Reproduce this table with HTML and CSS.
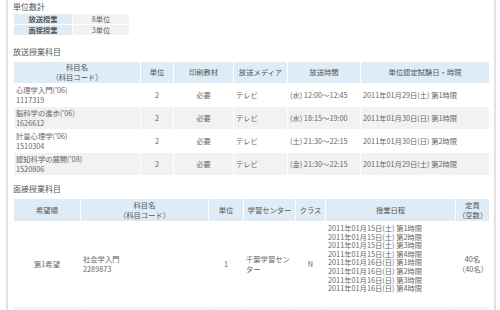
FILE: index.html
```html
<!DOCTYPE html>
<html lang="ja">
<head>
<meta charset="utf-8">
<title>単位数計</title>
<link rel="stylesheet" href="styles.css">
</head>
<body>
<div class="page">
  <h2 class="sec-title first">単位数計</h2>
  <table class="sum">
    <tr><th>放送授業</th><td>8単位</td></tr>
    <tr><th>面接授業</th><td>3単位</td></tr>
  </table>

  <h2 class="sec-title">放送授業科目</h2>
  <table class="grid bc">
    <colgroup>
      <col class="c-name"><col class="c-unit"><col class="c-text"><col class="c-media"><col class="c-time"><col class="c-exam">
    </colgroup>
    <thead>
      <tr><th>科目名<br>（科目コード）</th><th>単位</th><th>印刷教材</th><th>放送メディア</th><th>放送時間</th><th>単位認定試験日・時限</th></tr>
    </thead>
    <tbody>
      <tr><td>心理学入門(’06)<br>1117319</td><td class="ctr">2</td><td class="ctr">必要</td><td>テレビ</td><td>(水) 12:00〜12:45</td><td>2011年01月29日(土) 第1時限</td></tr>
      <tr class="alt"><td>脳科学の進歩(’06)<br>1626612</td><td class="ctr">2</td><td class="ctr">必要</td><td>テレビ</td><td>(水) 18:15〜19:00</td><td>2011年01月30日(日) 第1時限</td></tr>
      <tr><td>計量心理学(’06)<br>1510304</td><td class="ctr">2</td><td class="ctr">必要</td><td>テレビ</td><td>(土) 21:30〜22:15</td><td>2011年01月30日(日) 第2時限</td></tr>
      <tr class="alt"><td>認知科学の展開(’08)<br>1520806</td><td class="ctr">2</td><td class="ctr">必要</td><td>テレビ</td><td>(金) 21:30〜22:15</td><td>2011年01月29日(土) 第2時限</td></tr>
    </tbody>
  </table>

  <h2 class="sec-title">面接授業科目</h2>
  <table class="grid">
    <colgroup>
      <col class="d-pref"><col class="d-name"><col class="d-unit"><col class="d-center"><col class="d-class"><col class="d-sched"><col class="d-cap">
    </colgroup>
    <thead>
      <tr><th>希望順</th><th>科目名<br>（科目コード）</th><th>単位</th><th>学習センター</th><th>クラス</th><th>授業日程</th><th>定員<br>（空数）</th></tr>
    </thead>
    <tbody>
      <tr class="tall"><td class="ctr">第1希望</td><td>社会学入門<br>2289873</td><td class="ctr">1</td><td>千葉学習センター</td><td class="ctr">N</td>
        <td class="sched">2011年01月15日(土) 第1時限<br>2011年01月15日(土) 第2時限<br>2011年01月15日(土) 第3時限<br>2011年01月15日(土) 第4時限<br>2011年01月16日(日) 第1時限<br>2011年01月16日(日) 第2時限<br>2011年01月16日(日) 第3時限<br>2011年01月16日(日) 第4時限</td>
        <td class="ctr">40名<br>（40名）</td></tr>
      <tr class="alt tall"><td class="ctr">第2希望</td><td>社会学入門<br>2289873</td><td class="ctr">1</td><td>千葉学習センター</td><td class="ctr">N</td>
        <td class="sched">2010年10月05日(日) 第2時限<br>2010年10月05日(日) 第3時限<br>2010年10月05日(日) 第4時限<br>2010年10月12日(日) 第1時限<br>2010年10月12日(日) 第2時限<br>2010年10月12日(日) 第3時限<br>2010年10月12日(日) 第4時限<br>2010年10月19日(日) 第1時限</td>
        <td class="ctr">40名<br>（40名）</td></tr>
    </tbody>
  </table>
</div>
</body>
</html>
```

FILE: styles.css
```css
html, body {
  margin: 0;
  padding: 0;
  background: #fff;
  overflow: hidden;
}

body {
  font-family: "Noto Sans CJK JP", "Noto Sans", sans-serif;
  font-size: 7.3px;
  line-height: 10px;
  color: #666;
}

.page {
  margin-left: 6px;
  width: 476px;
  padding: 0 5px;
  border-left: 2px solid #e2e2e2;
  border-right: 2px solid #e2e2e2;
  min-height: 310px;
}

.sec-title {
  margin: 0;
  padding: 0;
  font-size: 8px;
  font-weight: normal;
  line-height: 10px;
  color: #555;
  height: 10px;
}

.sec-title.first {
  padding-top: 2px;
  margin-bottom: 1px;
}

.sum {
  border-collapse: collapse;
  width: 117px;
  table-layout: fixed;
  margin-bottom: 11px;
}

.sum th,
.sum td {
  border: 1px solid #fff;
  height: 10px;
  padding: 0;
  line-height: 10px;
  text-align: center;
}

.sum th {
  width: 58px;
  background: #ddecf6;
  font-weight: bold;
  color: #555;
}

.sum td {
  background: #f2f2f2;
}

.sec-title + .grid {
  margin-top: 4px;
}

.grid {
  border-collapse: collapse;
  table-layout: fixed;
  width: 476px;
  margin-bottom: 8px;
}

.grid th,
.grid td {
  border: 1px solid #fff;
  padding: 1px 2px;
  line-height: 10px;
  vertical-align: middle;
  text-align: left;
}

.grid th {
  background: #ddecf6;
  font-weight: normal;
  text-align: center;
  height: 20px;
  color: #555;
}

.grid.bc th {
  height: 18px;
  line-height: 9.5px;
}

.grid td {
  height: 20px;
}

.grid tr.alt td {
  background: #f2f2f2;
}

.grid .ctr {
  text-align: center;
}

.c-name { width: 127px; }
.c-unit { width: 33px; }
.c-text { width: 60px; }
.c-media { width: 54px; }
.c-time { width: 73px; }
.c-exam { width: 129px; }

.d-pref { width: 67px; }
.d-name { width: 128px; }
.d-unit { width: 35px; }
.d-center { width: 52px; }
.d-class { width: 30px; }
.d-sched { width: 130px; }
.d-cap { width: 34px; }

.grid tr.tall td {
  height: 81px;
}

.grid td.sched {
  vertical-align: top;
  padding-top: 2px;
  line-height: 8.6px;
}
```
